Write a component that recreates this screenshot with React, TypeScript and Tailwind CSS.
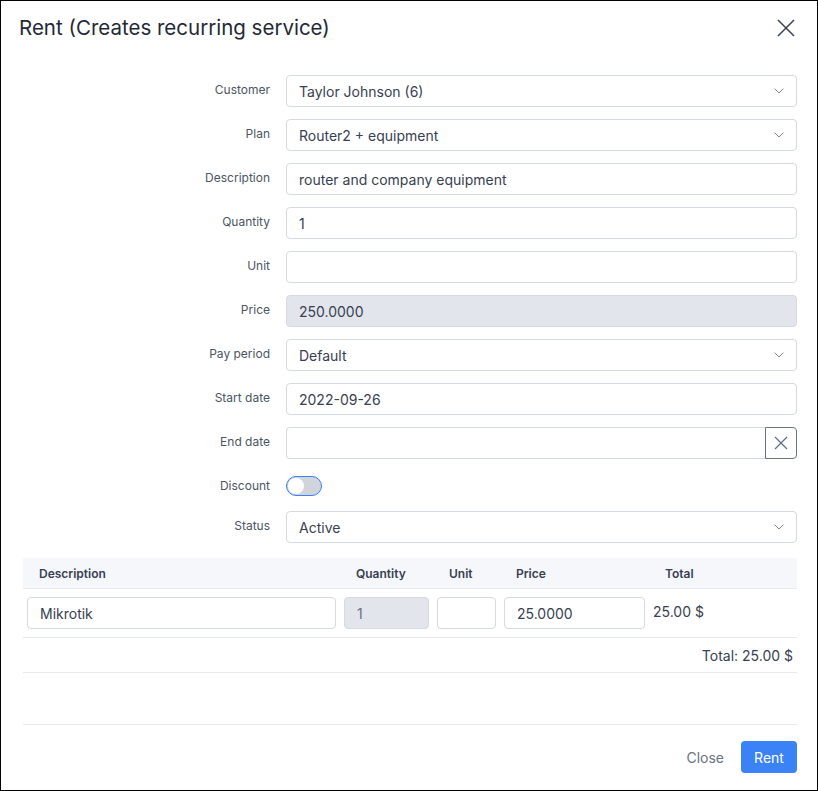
import React from 'react';
import { ChevronDown } from 'lucide-react';

const Label = ({ children }: { children: React.ReactNode }) => (
  <div className="w-[247px] shrink-0 text-right text-[12px] leading-4 text-[#4b5563] pt-[7px]">{children}</div>
);

const Field = ({ value, select, disabled }: { value?: string; select?: boolean; disabled?: boolean }) => (
  <div
    className={
      'flex-1 h-[32px] flex items-center justify-between rounded-[4px] border border-[#d5d9e0] pl-[12px] pr-[9px] text-[14px] text-[#374151] ' +
      (disabled ? 'bg-[#e2e5ec]' : 'bg-white')
    }
  >
    <span>{value}</span>
    {select && <ChevronDown size={16} strokeWidth={1.3} className="text-[#6b7280]" />}
  </div>
);

const Row = ({ label, children }: { label: string; children: React.ReactNode }) => (
  <div className="flex items-start gap-4 mb-3">
    <Label>{label}</Label>
    {children}
  </div>
);

export default function App() {
  return (
    <div
      className="w-[818px] h-[791px] border border-black bg-white flex flex-col"
      style={{ fontFamily: 'Inter, "Noto Sans", sans-serif' }}
    >
      <div className="flex items-center justify-between h-[54px] pl-[18px] pr-[22px]">
        <h1 className="text-[20.5px] font-normal text-[#1f2937]">Rent (Creates recurring service)</h1>
        <svg width="18" height="18" viewBox="0 0 18 18" className="text-[#374151]">
          <path d="M1 1 L17 17 M17 1 L1 17" stroke="currentColor" strokeWidth="1.5" />
        </svg>
      </div>

      <div className="pl-[22px] pr-[20px] pt-[20px] flex-1 flex flex-col">
        <Row label="Customer"><Field value="Taylor Johnson (6)" select /></Row>
        <Row label="Plan"><Field value="Router2 + equipment" select /></Row>
        <Row label="Description"><Field value="router and company equipment" /></Row>
        <Row label="Quantity"><Field value="1" /></Row>
        <Row label="Unit"><Field value="" /></Row>
        <Row label="Price"><Field value="250.0000" disabled /></Row>
        <Row label="Pay period"><Field value="Default" select /></Row>
        <Row label="Start date"><Field value="2022-09-26" /></Row>
        <Row label="End date">
          <div className="flex-1 flex h-[32px]">
            <div className="flex-1 rounded-l-[4px] border border-r-0 border-[#d5d9e0]" />
            <div className="w-[32px] flex items-center justify-center rounded-r-[4px] border border-[#6b7280]">
              <svg width="14" height="14" viewBox="0 0 14 14" className="text-[#5b6b8c]">
                <path d="M1 1 L13 13 M13 1 L1 13" stroke="currentColor" strokeWidth="1.2" />
              </svg>
            </div>
          </div>
        </Row>
        <div className="flex items-center gap-4 mb-3 h-[28px] pt-[2px]">
          <div className="w-[247px] shrink-0 text-right text-[12px] leading-4 text-[#4b5563]">Discount</div>
          <div className="w-[36px] h-[20px] rounded-full border border-[#3b82f6] bg-[#d1d5db] flex items-center px-[1px]">
            <div className="w-[16px] h-[16px] rounded-full bg-white" />
          </div>
        </div>
        <Row label="Status"><Field value="Active" select /></Row>

        <div className="mt-[3px]">
          <div className="flex h-[31px] items-center pt-[1px] bg-[#f6f7fb] text-[12px] font-semibold text-[#374151] border-b border-[#e8eaef]">
            <div className="w-[317px] pl-[16px]">Description</div>
            <div className="w-[93px] pl-[16px]">Quantity</div>
            <div className="w-[67px] pl-[16px]">Unit</div>
            <div className="w-[149px] pl-[16px]">Price</div>
            <div className="flex-1 pl-[16px]">Total</div>
          </div>
          <div className="flex items-center py-[8px] border-b border-[#e8eaef] text-[14px] text-[#374151]">
            <div className="w-[317px] px-[4px]">
              <div className="h-[32px] flex items-center rounded-[4px] border border-[#d5d9e0] pl-[12px]">Mikrotik</div>
            </div>
            <div className="w-[93px] px-[4px]">
              <div className="h-[32px] flex items-center rounded-[4px] border border-[#d5d9e0] bg-[#e2e5ec] pl-[12px] text-[#6b7280]">1</div>
            </div>
            <div className="w-[67px] px-[4px]">
              <div className="h-[32px] rounded-[4px] border border-[#d5d9e0]" />
            </div>
            <div className="w-[149px] px-[4px]">
              <div className="h-[32px] flex items-center rounded-[4px] border border-[#d5d9e0] pl-[12px]">25.0000</div>
            </div>
            <div className="flex-1 px-[4px] -mt-[4px]">25.00 $</div>
          </div>
          <div className="h-[35px] flex items-center justify-end pr-[4px] border-b border-[#e8eaef] text-[14px] text-[#374151]">
            Total: 25.00 $
          </div>
        </div>

        <div className="mt-auto border-t border-[#e8eaef] flex items-center justify-end gap-[5px] pt-[16px] pb-[17px]">
          <button className="h-[32px] px-[12px] text-[14px] text-[#6b7280]">Close</button>
          <button className="h-[32px] w-[56px] rounded-[4px] bg-[#3b82f6] text-[14px] text-white">Rent</button>
        </div>
      </div>
    </div>
  );
}
